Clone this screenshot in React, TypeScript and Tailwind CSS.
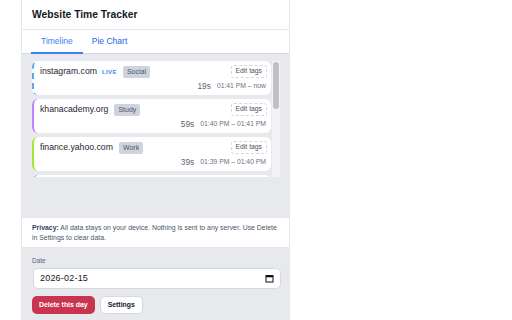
import React from "react";

type Entry = {
  domain: string;
  tag: string;
  dur: string;
  range: string;
  color: string;
  live?: boolean;
};

const entries: Entry[] = [
  { domain: "instagram.com", tag: "Social", dur: "19s", range: "01:41 PM – now", color: "border-l-[#60a5fa]", live: true },
  { domain: "khanacademy.org", tag: "Study", dur: "59s", range: "01:40 PM – 01:41 PM", color: "border-l-[#c084fc]" },
  { domain: "finance.yahoo.com", tag: "Work", dur: "39s", range: "01:39 PM – 01:40 PM", color: "border-l-[#a3e635]" },
  { domain: "google.com", tag: "Search", dur: "1m 2s", range: "01:38 PM – 01:39 PM", color: "border-l-[#60a5fa]" },
];

function Card({ e }: { e: Entry }) {
  return (
    <div
      className={`shrink-0 bg-white rounded-[6px] border-l-2 ${e.color} ${e.live ? "border-dashed" : "border-solid"} pl-[6px] pr-[5px] pt-[4px] pb-[4px]`}
    >
      <div className="flex items-center justify-between h-[13px]">
        <div className="flex items-center">
          <span className="text-[8.7px] text-[#1f2430] leading-none">{e.domain}</span>
          {e.live && (
            <span className="ml-[5px] text-[6px] font-bold text-[#3b82f6] tracking-[0.4px] leading-none">LIVE</span>
          )}
          <span className="ml-[6px] bg-[#cfd3dd] text-[#4b5368] text-[7px] rounded-[2px] px-[4px] h-[12px] flex items-center leading-none">
            {e.tag}
          </span>
        </div>
        <span className="outline outline-1 outline-dashed outline-[#d4d7de] rounded-[2px] text-[6.8px] text-[#4b5563] px-[4px] h-[11px] flex items-center leading-none">
          Edit tags
        </span>
      </div>
      <div className="flex items-center justify-end mt-[3px] h-[10px]">
        <span className="text-[8.3px] text-[#5b6374] leading-none">{e.dur}</span>
        <span className="ml-[6px] text-[6.8px] text-[#6b7280] leading-none">{e.range}</span>
      </div>
    </div>
  );
}

export default function App() {
  return (
    <div className="w-[512px] h-[320px] bg-white overflow-hidden" style={{ fontFamily: '"Liberation Sans", Arial, sans-serif' }}>
      <div className="ml-[21px] w-[269px] h-[320px] border-x border-[#e5e7eb] bg-[#e8e9ed] flex flex-col">
        <div className="h-[30px] shrink-0 bg-white border-b border-[#e5e7eb] flex items-center pl-[10px]">
          <span className="text-[10.3px] font-bold text-[#111827]">Website Time Tracker</span>
        </div>
        <div className="h-[24px] shrink-0 bg-white flex items-end pl-[9px] border-b border-[#d6d9df]">
          <div className="h-full px-[10px] flex items-center border-b-2 border-[#3b82f6] -mb-px">
            <span className="text-[8.5px] text-[#3b82f6]">Timeline</span>
          </div>
          <div className="h-full px-[9px] flex items-center">
            <span className="text-[8.5px] text-[#2563eb]">Pie Chart</span>
          </div>
        </div>
        <div className="h-[163px] shrink-0 pt-[7px] pl-[10px] pr-[9px]">
          <div className="h-[116px] flex gap-[1px]">
            <div className="flex-1 h-full overflow-hidden flex flex-col gap-[4px]">
              {entries.map((e) => (
                <Card key={e.domain} e={e} />
              ))}
            </div>
            <div className="w-[8px] h-full bg-[#f4f4f5] px-[1px] pt-[1px]">
              <div className="h-[47px] w-full rounded-[3px] bg-[#c1c1c1]" />
            </div>
          </div>
        </div>
        <div className="h-[31px] shrink-0 bg-white border-y border-[#e5e7eb] px-[10px] flex items-center">
          <p className="text-[6.9px] leading-[10px] text-[#4b5368]">
            <span className="font-bold text-[#374160]">Privacy:</span> All data stays on your device. Nothing is sent to any server. Use Delete in Settings to clear data.
          </p>
        </div>
        <div className="flex-1 px-[10px] pt-[8px]">
          <div className="text-[6.5px] text-[#5b6478] h-[10px] leading-[10px]">Date</div>
          <div className="mt-[2px] h-[21px] w-[248px] ml-[1px] bg-white border border-[#d6d9df] rounded-[5px] flex items-center justify-between px-[6px]">
            <span className="text-[9px] text-[#111827] tracking-[0.2px]">2026-02-15</span>
            <svg width="9" height="9" viewBox="0 0 9 9">
              <rect x="1" y="1.5" width="7" height="6.5" fill="none" stroke="#111" strokeWidth="1" />
              <rect x="1" y="1.5" width="7" height="1.8" fill="#111" />
            </svg>
          </div>
          <div className="mt-[7px] flex gap-[5px]">
            <button className="h-[18px] px-[7px] rounded-[5px] bg-[#c9354f] text-white text-[6.9px] font-bold">Delete this day</button>
            <button className="h-[18px] px-[7px] rounded-[5px] bg-white border border-[#d6d9df] text-[#111827] text-[6.9px] font-bold">Settings</button>
          </div>
        </div>
      </div>
    </div>
  );
}
